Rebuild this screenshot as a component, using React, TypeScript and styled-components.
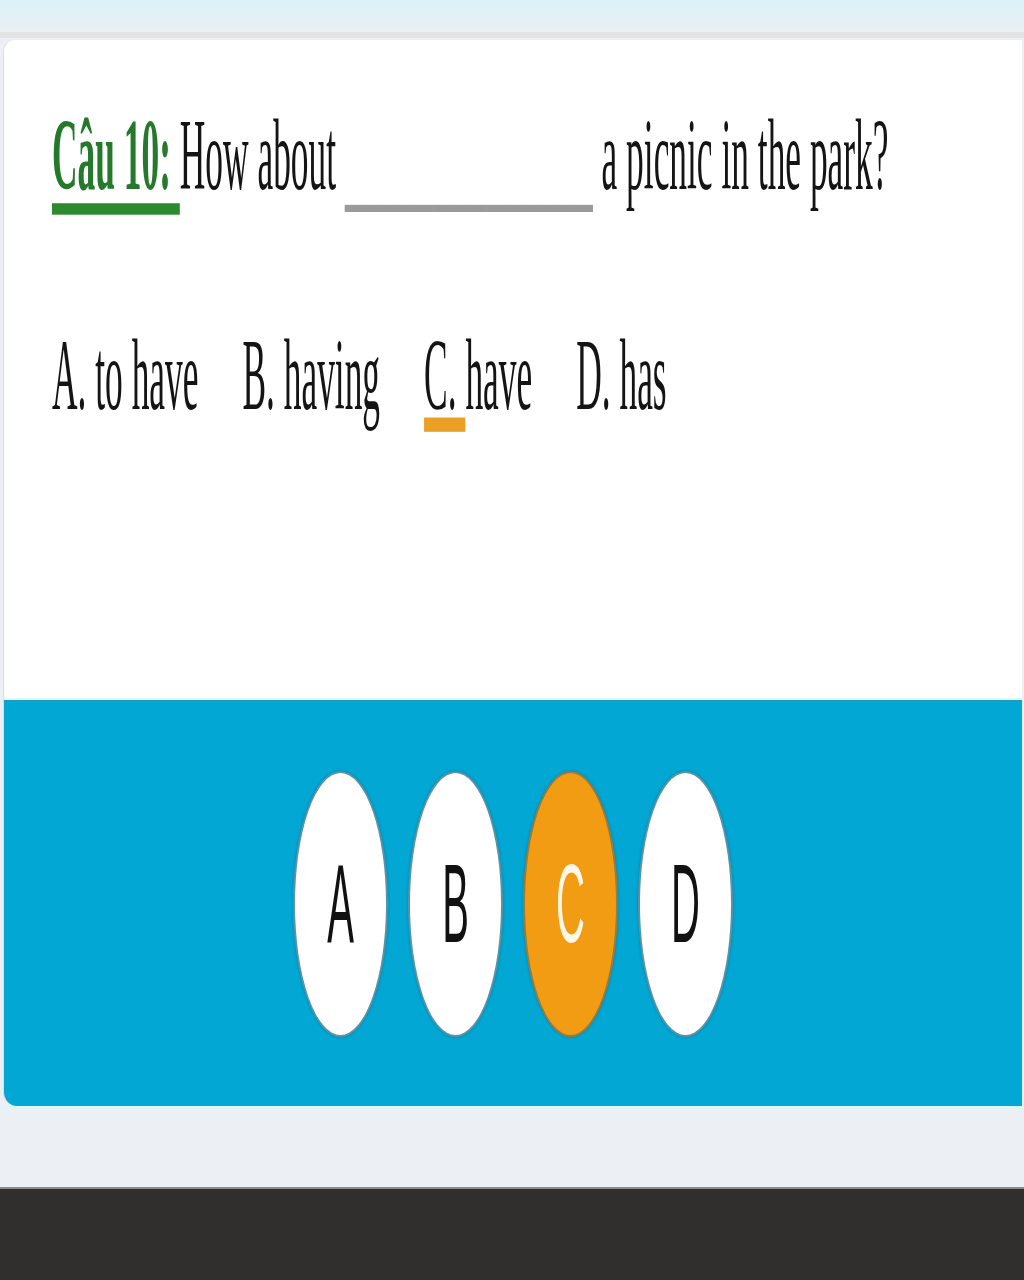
import React from "react";
import styled, { createGlobalStyle } from "styled-components";

const GlobalStyle = createGlobalStyle`
  html, body {
    margin: 0;
    padding: 0;
    background: #eceff3;
  }
  #root {
    min-height: 1280px;
    display: flex;
    flex-direction: column;
  }
`;

const TopBar = styled.div`
  height: 32px;
  background: linear-gradient(#d9f3f9, #eceef2);
  border-bottom: 6px solid #e3e3e4;
`;

const Card = styled.div`
  margin: 2px 2px 0 3px;
  border-left: 1px solid #dcdcdc;
  border-radius: 12px 0 0 14px;
  overflow: hidden;
`;

const QuestionPane = styled.div`
  background: #ffffff;
  height: 660px;
  padding: 66px 0 0 48px;
  box-sizing: border-box;
  border-bottom: 2px solid #e2f7fb;
`;

const TextLine = styled.div<{ $gap?: number }>`
  height: 100px;
  margin-bottom: ${(p) => p.$gap ?? 0}px;
  font-family: "Liberation Serif", "Times New Roman", serif;
  font-size: 35.4px;
  line-height: 35px;
  color: #141414;
`;

const Stretch = styled.span`
  display: inline-flex;
  gap: 44px;
  white-space: pre;
  transform: scaleY(2.86);
  transform-origin: 0 0;
`;

const Label = styled.span`
  font-weight: bold;
  color: #24792a;
  text-decoration: underline;
  text-decoration-color: #2c8a2f;
  text-decoration-thickness: 3.5px;
  text-underline-offset: 4.5px;
`;

const Blank = styled.span`
  color: #9a9a9a;
  font-weight: bold;
  position: relative;
  top: 2.5px;
`;

const Option = styled.span``;

const Marked = styled.span`
  text-decoration: underline;
  text-decoration-color: #eaa024;
  text-decoration-thickness: 4.5px;
  text-underline-offset: 2.5px;
`;

const AnswerPane = styled.div`
  background: #02a7d3;
  border-top: 2px solid #1a9cc3;
  height: 404px;
  display: flex;
  align-items: center;
  justify-content: center;
  gap: 20px;
`;

const Bubble = styled.button<{ $active?: boolean }>`
  width: 95px;
  height: 266px;
  padding: 0;
  border-radius: 50%;
  border: 2px solid ${(p) => (p.$active ? "#9b7a3c" : "#5b93a6")};
  background: ${(p) => (p.$active ? "#f29c13" : "#ffffff")};
  color: ${(p) => (p.$active ? "#fff8e8" : "#111111")};
  box-shadow: 0 0 3px rgba(0, 60, 90, 0.35);
  display: flex;
  align-items: center;
  justify-content: center;
  font-family: "Liberation Sans", Arial, sans-serif;
  font-size: 40px;
  font-weight: ${(p) => (p.$active ? 300 : 400)};
  cursor: pointer;
`;

const BubbleLetter = styled.span`
  display: inline-block;
  transform: scaleY(2.8);
`;

const Gutter = styled.div`
  height: 78px;
  border-top: 3px solid #def4fa;
  background: #eceff3;
`;

const Footer = styled.div`
  flex: 1;
  background: #302f2d;
  border-top: 2px solid #8c8c8c;
`;

const letters = ["A", "B", "C", "D"];

export default function App() {
  return (
    <>
      <GlobalStyle />
      <TopBar />
      <Card>
        <QuestionPane>
          <TextLine $gap={120}>
            <Stretch>
              <span>
                <Label>Câu 10: </Label>How about <Blank>______________</Blank>{" "}
                a picnic in the park?
              </span>
            </Stretch>
          </TextLine>
          <TextLine>
            <Stretch>
              <Option>A. to have</Option>
              <Option>B. having</Option>
              <Option>
                <Marked>C. </Marked>have
              </Option>
              <Option>D. has</Option>
            </Stretch>
          </TextLine>
        </QuestionPane>
        <AnswerPane>
          {letters.map((l) => (
            <Bubble key={l} $active={l === "C"}>
              <BubbleLetter>{l}</BubbleLetter>
            </Bubble>
          ))}
        </AnswerPane>
      </Card>
      <Gutter />
      <Footer />
    </>
  );
}
